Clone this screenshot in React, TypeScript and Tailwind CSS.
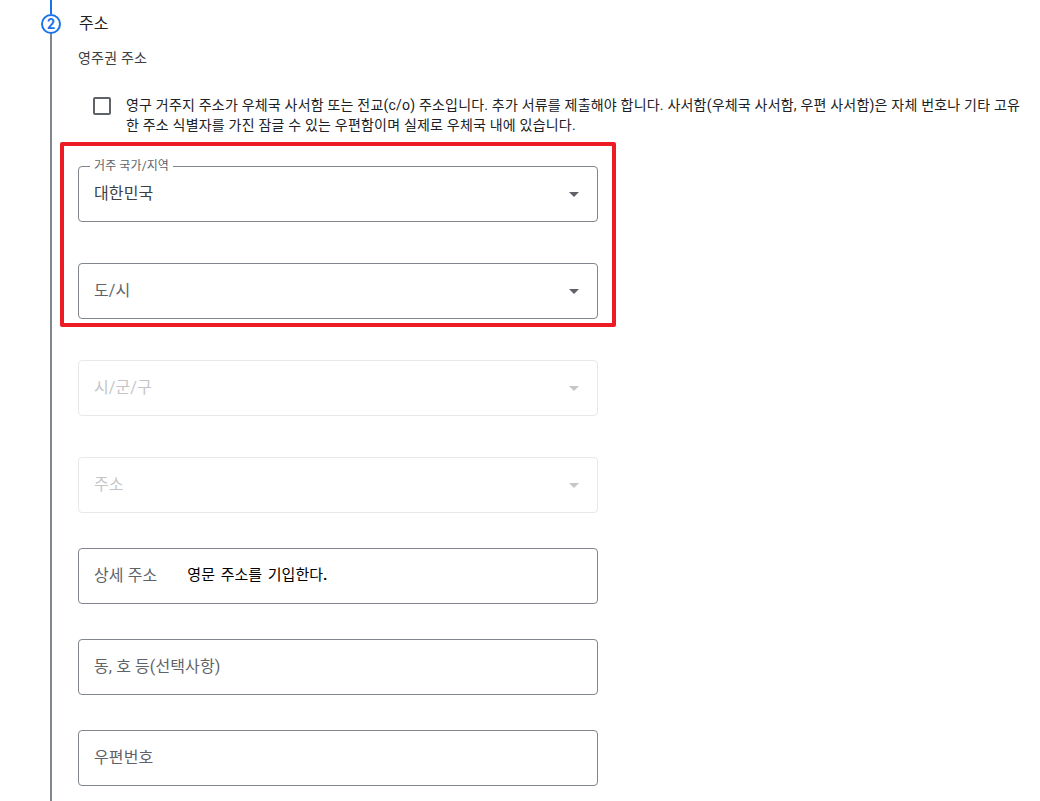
import type { ReactNode } from 'react';

type FieldProps = {
    label: string;
    value?: string;
    note?: ReactNode;
    select?: boolean;
    disabled?: boolean;
};

function Arrow({ disabled }: { disabled?: boolean }) {
    return (
        <svg width="10" height="5" viewBox="0 0 10 5" className={disabled ? 'text-[#c4c5c7]' : 'text-[#5f6368]'}>
            <path d="M0 0h10L5 5z" fill="currentColor" />
        </svg>
    );
}

function Field({ label, value, note, select, disabled }: FieldProps) {
    const border = disabled ? 'border-[#e8e8e9]' : 'border-[#80868b]';
    const text = disabled ? 'text-[#c4c5c7]' : value ? 'text-[#3c4043]' : 'text-[#5f6368]';

    return (
        <div className={`relative flex h-14 w-[520px] items-center rounded-sm border pr-[18px] pl-[15px] ${border}`}>
            {value && (
                <span className="absolute -top-[9px] left-[11px] bg-white px-1 text-[12px] leading-4 tracking-[0.1px] whitespace-nowrap text-[#5f6368]">
                    {label}
                </span>
            )}
            <span className={`text-[16px] leading-6 tracking-[0.1px] whitespace-nowrap ${text}`}>{value ?? label}</span>
            {note && (
                <span className="mb-[3px] ml-[30px] text-[15px] leading-6 [word-spacing:2px] whitespace-nowrap text-black">
                    {note}
                </span>
            )}
            {select && (
                <span className="ml-auto">
                    <Arrow disabled={disabled} />
                </span>
            )}
        </div>
    );
}

export default function App() {
    return (
        <main className="flex h-[801px] w-[1040px] overflow-hidden bg-white pl-[41px] font-[Roboto,'Noto_Sans_CJK_KR',sans-serif] text-[#202124]">
            <div className="flex w-5 shrink-0 flex-col items-center">
                <div className="h-[14px] w-0.5 bg-[#1a73e8]" />
                <div className="flex size-5 shrink-0 items-center justify-center rounded-full border-2 border-[#1a73e8] text-[14px] leading-4 font-bold text-[#1a73e8]">
                    2
                </div>
                <div className="w-0.5 flex-1 bg-[#80868b]" />
            </div>

            <div className="ml-[17px] flex flex-col">
                <h2 className="mt-3 ml-px text-[16px] leading-6">주소</h2>
                <p className="mt-3 text-[14px] leading-5 tracking-[0.2px] text-[#3c4043]">영주권 주소</p>

                <div className="mt-[27px] flex h-[71px] items-start">
                    <div className="mt-[2px] ml-[15px] size-[18px] shrink-0 rounded-xs border-2 border-[#5f6368]" />
                    <p className="ml-[15px] text-[14px] leading-5 tracking-[0.2px] whitespace-nowrap">
                        영구 거주지 주소가 우체국 사서함 또는 전교(c/o) 주소입니다. 추가 서류를 제출해야 합니다. 사서함(우체국 사서함, 우편 사서함)은 자체 번호나 기타 고유
                        <br />
                        한 주소 식별자를 가진 잠글 수 있는 우편함이며 실제로 우체국 내에 있습니다.
                    </p>
                </div>

                <div className="relative flex flex-col gap-[41px]">
                    <Field label="거주 국가/지역" value="대한민국" select />
                    <Field label="도/시" select />
                    <Field label="시/군/구" select disabled />
                    <Field label="주소" select disabled />
                    <div className="pointer-events-none absolute -top-6 -left-[18px] h-[185px] w-[556px] rounded-xs border-4 border-[#ed1c24]" />
                </div>

                <div className="mt-[35px] flex flex-col gap-[35px]">
                    <Field label="상세 주소" note={<>영문 주소를 기입한다<b>.</b></>} />
                    <Field label="동, 호 등(선택사항)" />
                    <Field label="우편번호" />
                </div>
            </div>
        </main>
    );
}
